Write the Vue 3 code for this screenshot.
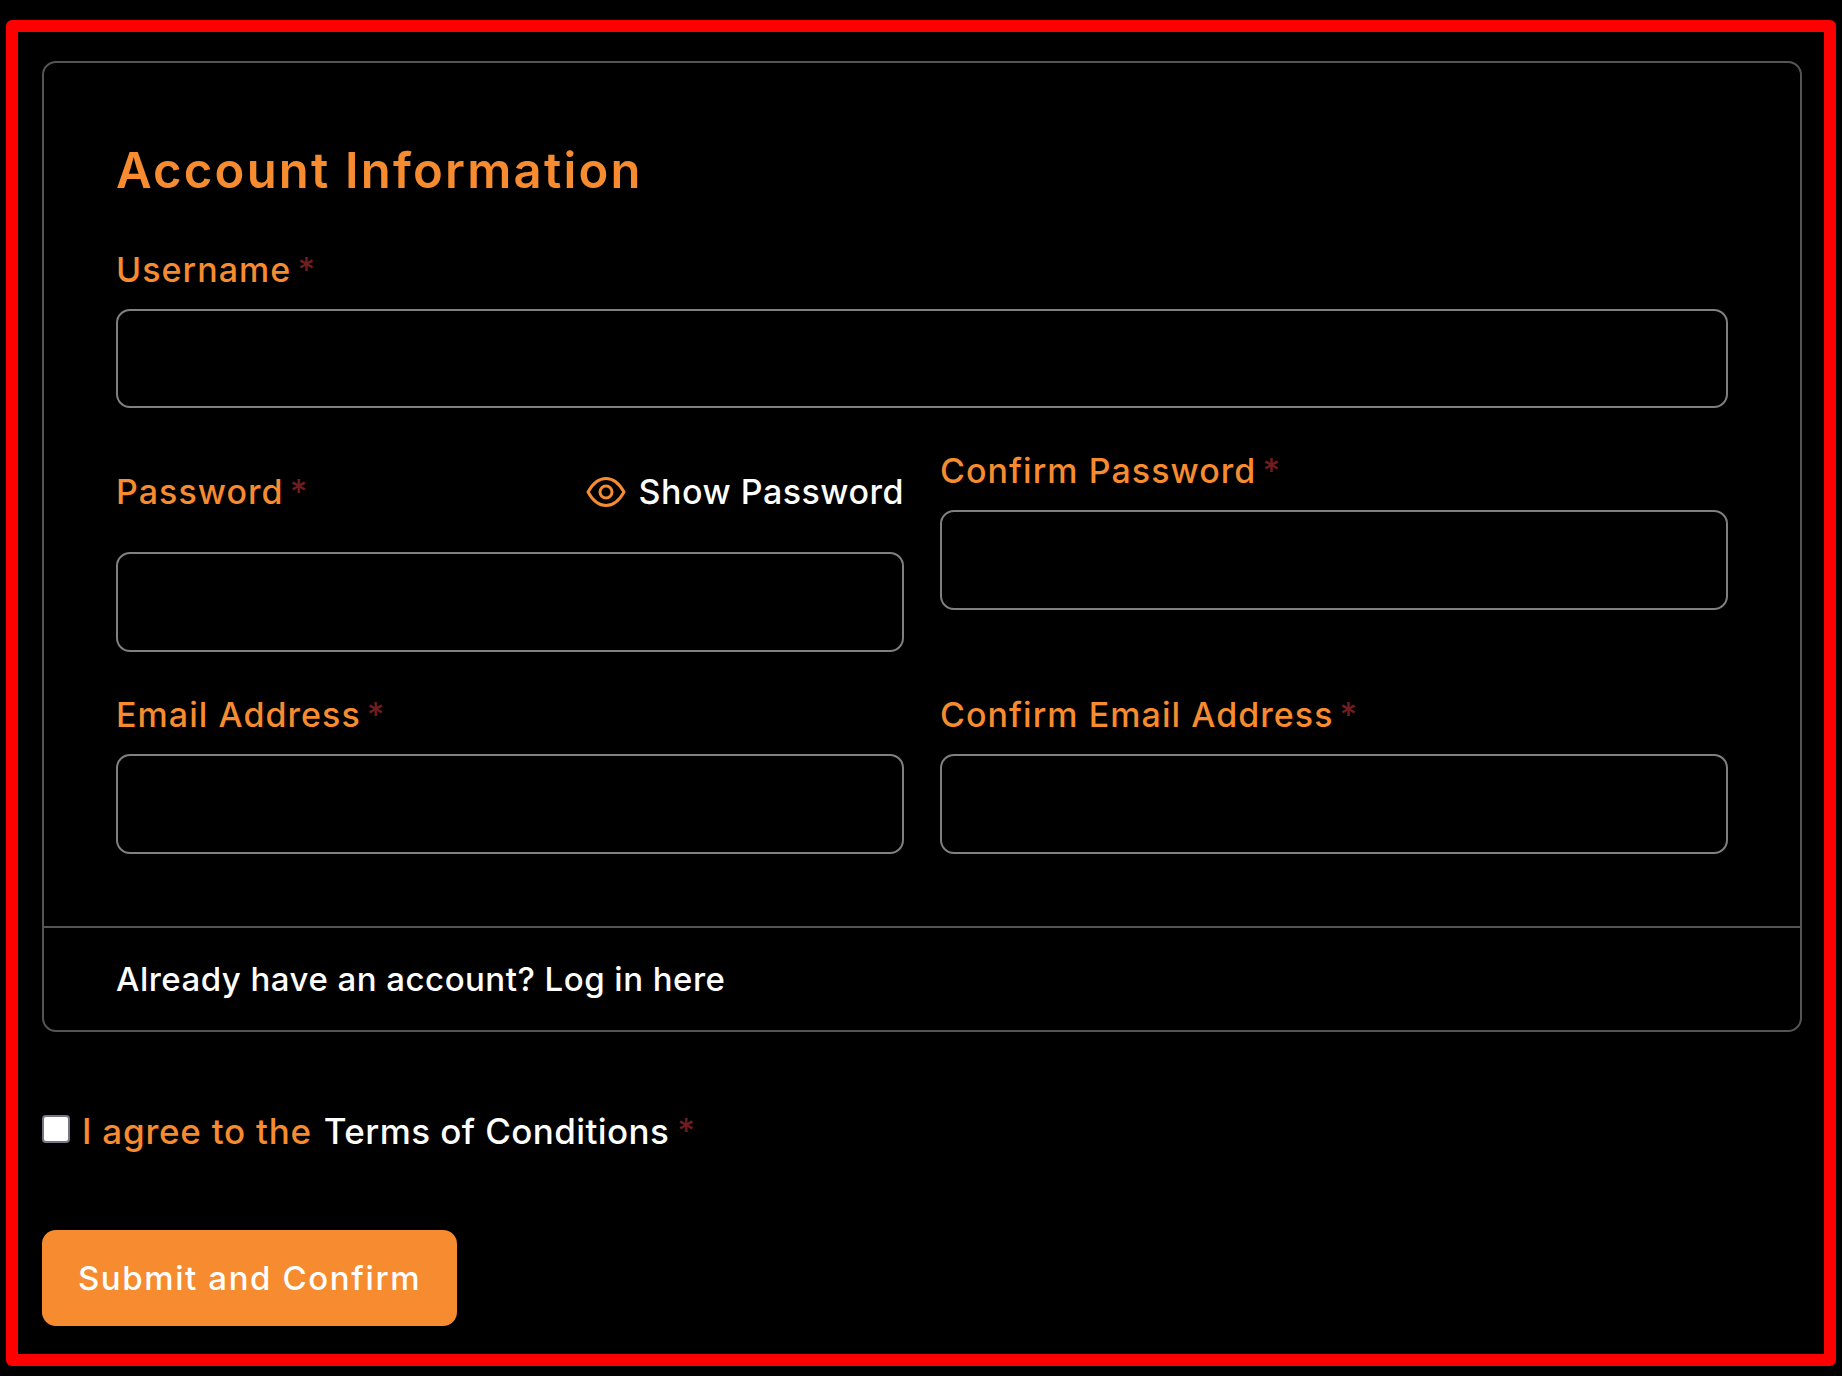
<script setup>
const pairs = [
  { label: 'Email Address' },
  { label: 'Confirm Email Address' },
]
</script>

<template>
  <main class="frame">
    <section class="card">
      <div class="card-body">
        <h2 class="title">Account Information</h2>
        <div class="field full">
          <label class="label">Username<span class="req">*</span></label>
          <input class="input" type="text" />
        </div>
        <div class="row row-pass">
          <div class="field">
            <div class="pass-head">
              <label class="label">Password<span class="req">*</span></label>
              <span class="toggle">
                <svg class="eye" viewBox="0 0 40 32" fill="none" stroke="#f68b2f" stroke-width="3" stroke-linejoin="round">
                  <path d="M2 16 C7 7 13 2.5 20 2.5 S33 7 38 16 C33 25 27 29.5 20 29.5 S7 25 2 16 Z" />
                  <circle cx="20" cy="16" r="6" />
                </svg>
                Show Password
              </span>
            </div>
            <input class="input" type="password" />
          </div>
          <div class="field">
            <label class="label">Confirm Password<span class="req">*</span></label>
            <input class="input" type="password" />
          </div>
        </div>
        <div class="row row-mail">
          <div v-for="p in pairs" :key="p.label" class="field">
            <label class="label">{{ p.label }}<span class="req">*</span></label>
            <input class="input" type="email" />
          </div>
        </div>
      </div>
      <div class="card-foot">Already have an account? Log in here</div>
    </section>

    <div class="agree">
      <span class="box"></span>
      <span class="agree-text">I agree to the</span>
      <span class="terms">Terms of Conditions</span>
      <span class="req">*</span>
    </div>

    <button class="submit" type="button">Submit and Confirm</button>
  </main>
</template>

<style>
html, body { margin: 0; background: #000; }
</style>

<style scoped>
.frame {
  box-sizing: border-box;
  width: 1830px;
  height: 1346px;
  margin: 20px 6px 10px;
  border: 12px solid #f00;
  border-radius: 6px;
  padding: 29px 22px 0 24px;
  font-family: Inter, "Liberation Sans", sans-serif;
  background: #000;
}
.card {
  box-sizing: border-box;
  height: 971px;
  border: 2px solid #555;
  border-radius: 14px;
  display: flex;
  flex-direction: column;
}
.card-body {
  box-sizing: border-box;
  height: 865px;
  padding: 79px 72px 0;
  border-bottom: 2px solid #555;
}
.title {
  margin: 0 0 50px;
  font-size: 49px;
  line-height: 58px;
  font-weight: 600;
  color: #f68b2f;
  letter-spacing: 2.2px;
}
.label {
  display: block;
  font-size: 34px;
  line-height: 40px;
  font-weight: 500;
  color: #f68b2f;
  letter-spacing: 1.05px;
}
.req { color: #6f1d1f; font-size: 34px; margin-left: 6px; }
.input {
  display: block;
  box-sizing: border-box;
  width: 100%;
  height: 99px;
  margin-top: 19px;
  background: #000;
  border: 2px solid #808080;
  border-radius: 14px;
  outline: none;
}
.row .input { height: 100px; }
.row {
  display: grid;
  grid-template-columns: 1fr 1fr;
  column-gap: 36px;
}
.row-pass { margin-top: 43px; align-items: start; }
.row-mail { margin-top: 43px; }
.pass-head {
  display: flex;
  justify-content: space-between;
  align-items: center;
}
.pass-head + .input { margin-top: 40px; }
.row-pass .field:first-child { padding-top: 21px; }
.toggle {
  display: flex;
  align-items: center;
  gap: 13px;
  font-size: 34px;
  line-height: 40px;
  font-weight: 500;
  color: #fff;
  letter-spacing: 0.5px;
}
.eye { width: 40px; height: 32px; }
.card-foot {
  padding-left: 72px;
  flex: 1;
  display: flex;
  align-items: center;
  font-size: 33px;
  letter-spacing: 0.48px;
  font-weight: 500;
  color: #fff;
}
.agree {
  display: flex;
  align-items: center;
  margin-top: 82px;
  height: 34px;
  font-size: 35px;
  font-weight: 500;
  letter-spacing: 0.4px;
  line-height: 40px;
}
.box {
  box-sizing: border-box;
  width: 28px;
  height: 28px;
  background: #fff;
  border: 2px solid #767686;
  border-radius: 4px;
  margin-right: 12px;
  margin-top: -4px;
}
.agree-text { color: #f68b2f; margin-right: 12px; letter-spacing: 0.75px; }
.terms { color: #fff; margin-right: 8px; }
.agree .req { margin-left: 0; }
.submit {
  display: block;
  box-sizing: border-box;
  width: 415px;
  height: 96px;
  margin-top: 82px;
  border: 0;
  border-radius: 14px;
  background: #f68b2f;
  color: #fff;
  font-family: inherit;
  font-size: 33px;
  font-weight: 500;
  letter-spacing: 1.6px;
}
</style>
